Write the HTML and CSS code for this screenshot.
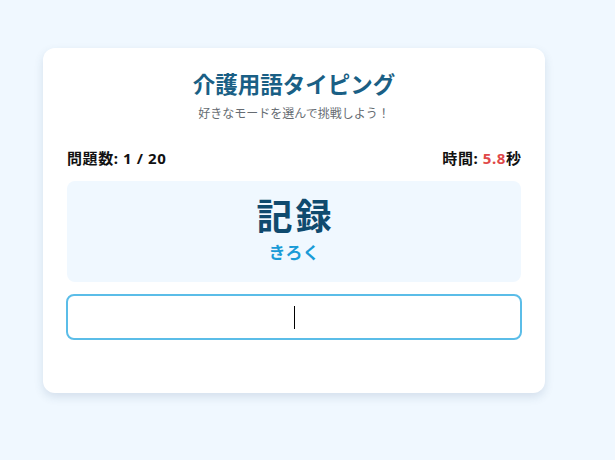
FILE: index.html
```html
<!DOCTYPE html>
<html lang="ja">
<head>
<meta charset="utf-8">
<title>介護用語タイピング</title>
<link rel="stylesheet" href="styles.css">
</head>
<body>
<div class="card">
  <h1 class="title">介護用語タイピング</h1>
  <p class="subtitle">好きなモードを選んで挑戦しよう！</p>
  <div class="stats">
    <span>問題数: 1 / 20</span>
    <span>時間: <span class="time">5.8</span>秒</span>
  </div>
  <div class="word-box">
    <div class="word">記録</div>
    <div class="reading">きろく</div>
  </div>
  <div class="answer"><span class="caret"></span></div>
</div>
</body>
</html>
```
FILE: styles.css
```css
html, body {
  margin: 0;
  padding: 0;
}
body {
  background: #f0f8ff;
  font-family: "Noto Sans", "Noto Sans CJK JP", sans-serif;
  height: 460px;
  overflow: hidden;
}
.card {
  box-sizing: border-box;
  width: 502px;
  margin: 48px 0 0 43px;
  background: #ffffff;
  border-radius: 12px;
  box-shadow: 0 4px 10px rgba(40, 80, 120, 0.14);
  padding: 22px 24px 53px;
}
.title {
  margin: 0;
  text-align: center;
  font-size: 22.5px;
  line-height: 30px;
  font-weight: 700;
  color: #1a5f85;
}
.subtitle {
  margin: 6px 0 0;
  text-align: center;
  font-size: 12px;
  line-height: 16px;
  color: #666c72;
}
.stats {
  display: flex;
  justify-content: space-between;
  margin-top: 26px;
  font-family: "Noto Sans", "Noto Sans CJK JP", sans-serif;
  font-size: 15px;
  line-height: 20px;
  font-weight: 700;
  color: #111;
  letter-spacing: 0.6px;
}
.stats > span:last-child {
  margin-right: -0.6px;
}
.time {
  color: #e04848;
}
.word-box {
  margin-top: 13px;
  height: 101px;
  box-sizing: border-box;
  padding-bottom: 4px;
  background: #f0f8ff;
  border-radius: 8px;
  display: flex;
  flex-direction: column;
  align-items: center;
  justify-content: center;
}
.word {
  font-size: 36px;
  line-height: 42px;
  font-weight: 700;
  color: #0f4a6e;
  letter-spacing: 3px;
  padding-left: 3px;
}
.reading {
  margin-top: 4px;
  font-size: 17px;
  line-height: 22px;
  font-weight: 700;
  color: #1a9bd7;
}
.answer {
  margin-top: 12px;
  margin-left: -1px;
  margin-right: -1px;
  height: 46px;
  box-sizing: border-box;
  border: 2px solid #5bbde8;
  border-radius: 8px;
  background: #fff;
  display: flex;
  align-items: center;
  justify-content: center;
}
.caret {
  display: block;
  width: 1px;
  height: 23px;
  background: #000;
}
```
